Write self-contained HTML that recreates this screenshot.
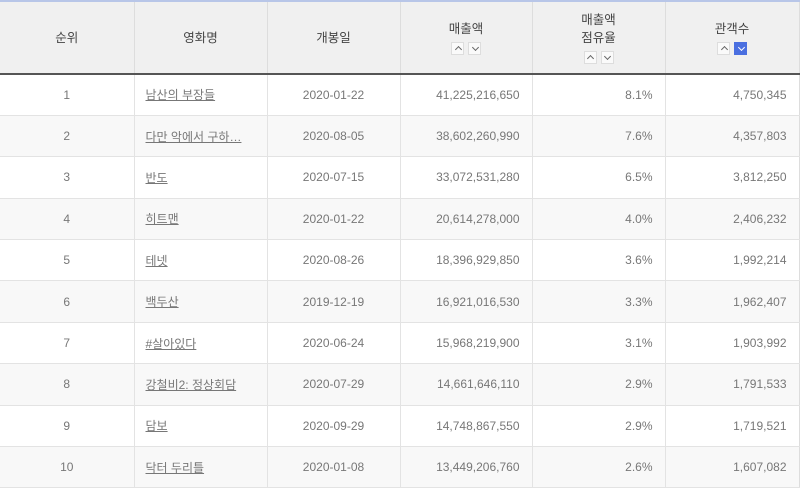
<!DOCTYPE html><html><head><meta charset="utf-8"><style>
*{margin:0;padding:0;box-sizing:border-box}
body{width:800px;height:490px;overflow:hidden;background:#fff;font-family:"Liberation Sans","Noto Sans CJK KR",sans-serif;font-size:12px;color:#666}
table{border-collapse:collapse;width:799px;table-layout:fixed;position:absolute;left:0;top:0}
th{background:#f0f0f0;height:73px;border-top:2px solid #b8c6e8;border-bottom:2px solid #555;border-right:1px solid #ddd;font-weight:normal;color:#444;font-size:12.5px;line-height:18px;vertical-align:middle}
td{height:41.4px;border-bottom:1px solid #e3e3e3;border-right:1px solid #e3e3e3;color:#777}
th:last-child,td:last-child{border-right:1px solid #ddd}
tr.e td{background:#f8f8f8}
.c{text-align:center}.r{text-align:right;padding-right:12px}
td a{color:#777;text-decoration:underline;padding-left:11px}
.b{display:inline-block;width:13px;height:13px;border:1px solid #ddd;background:#fafafa;margin:4px 2px 0;vertical-align:top;position:relative}
.b:after{content:"";position:absolute;left:3.5px;width:4px;height:4px;border-left:1.2px solid #666;border-top:1.2px solid #666}
.u:after{top:4.5px;transform:rotate(45deg)}
.d:after{top:2.5px;transform:rotate(225deg)}
.on{background:#4a6fe0;border-color:#4a6fe0}.on:after{border-color:#fff}
</style></head><body>
<table>
<colgroup><col style="width:134px"><col style="width:133px"><col style="width:133px"><col style="width:132px"><col style="width:133px"><col style="width:134px"></colgroup>
<tr><th>순위</th><th>영화명</th><th>개봉일</th><th>매출액<br><span class="b u"></span><span class="b d"></span></th><th>매출액<br>점유율<br><span class="b u"></span><span class="b d"></span></th><th>관객수<br><span class="b u"></span><span class="b d on"></span></th></tr>
<tr><td class="c">1</td><td><a>남산의 부장들</a></td><td class="c">2020-01-22</td><td class="r">41,225,216,650</td><td class="r">8.1%</td><td class="r">4,750,345</td></tr>
<tr class="e"><td class="c">2</td><td><a>다만 악에서 구하…</a></td><td class="c">2020-08-05</td><td class="r">38,602,260,990</td><td class="r">7.6%</td><td class="r">4,357,803</td></tr>
<tr><td class="c">3</td><td><a>반도</a></td><td class="c">2020-07-15</td><td class="r">33,072,531,280</td><td class="r">6.5%</td><td class="r">3,812,250</td></tr>
<tr class="e"><td class="c">4</td><td><a>히트맨</a></td><td class="c">2020-01-22</td><td class="r">20,614,278,000</td><td class="r">4.0%</td><td class="r">2,406,232</td></tr>
<tr><td class="c">5</td><td><a>테넷</a></td><td class="c">2020-08-26</td><td class="r">18,396,929,850</td><td class="r">3.6%</td><td class="r">1,992,214</td></tr>
<tr class="e"><td class="c">6</td><td><a>백두산</a></td><td class="c">2019-12-19</td><td class="r">16,921,016,530</td><td class="r">3.3%</td><td class="r">1,962,407</td></tr>
<tr><td class="c">7</td><td><a>#살아있다</a></td><td class="c">2020-06-24</td><td class="r">15,968,219,900</td><td class="r">3.1%</td><td class="r">1,903,992</td></tr>
<tr class="e"><td class="c">8</td><td><a>강철비2: 정상회담</a></td><td class="c">2020-07-29</td><td class="r">14,661,646,110</td><td class="r">2.9%</td><td class="r">1,791,533</td></tr>
<tr><td class="c">9</td><td><a>담보</a></td><td class="c">2020-09-29</td><td class="r">14,748,867,550</td><td class="r">2.9%</td><td class="r">1,719,521</td></tr>
<tr class="e"><td class="c">10</td><td><a>닥터 두리틀</a></td><td class="c">2020-01-08</td><td class="r">13,449,206,760</td><td class="r">2.6%</td><td class="r">1,607,082</td></tr>
</table>
</body></html>
